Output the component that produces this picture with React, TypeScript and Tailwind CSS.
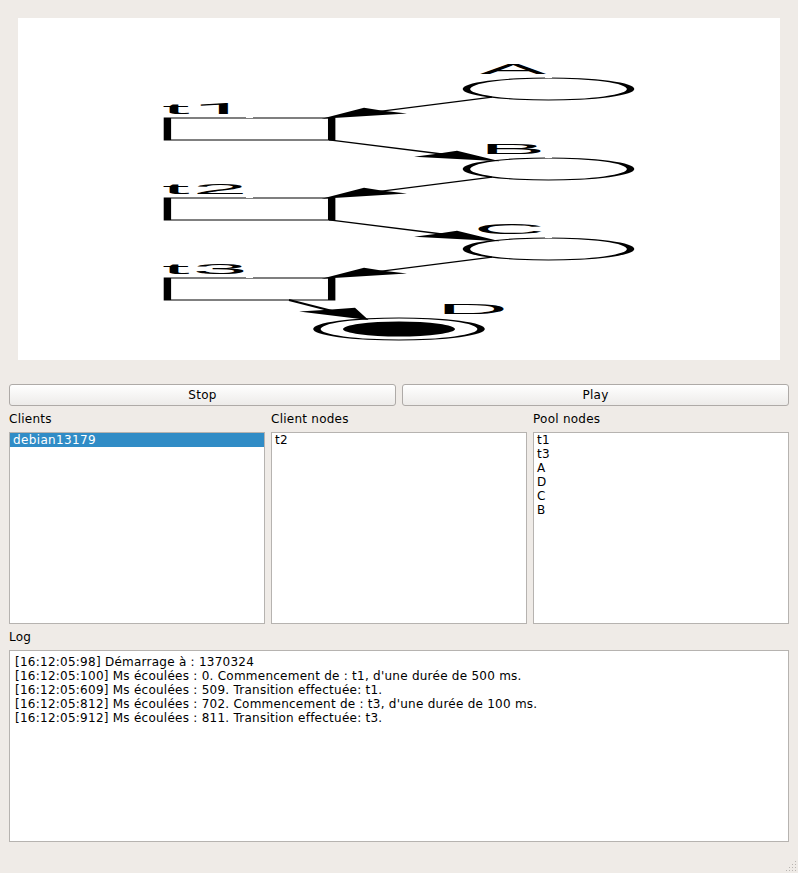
import React from "react";

const places = [
  { name: "A", x: 480, cy: 89 },
  { name: "B", x: 479.5, cy: 169 },
  { name: "C", x: 473.5, cy: 249 },
];
const transitions = [
  { digit: "1", y: 118 },
  { digit: "2", y: 198 },
  { digit: "3", y: 278 },
];

// Horizontal stretch of the net view relative to its natural proportions
const SX = 7.45;

function Label({ x, y, children }: { x: number; y: number; children: string }) {
  return (
    <text
      transform={`translate(${x} ${y}) scale(6.95 1)`}
      fontSize="14.3"
      className={
        children === "1"
          ? "font-[Roboto,sans-serif]"
          : "font-['Liberation_Sans',Arial,sans-serif]"
      }
    >
      {children}
    </text>
  );
}

function Place({ cx, cy }: { cx: number; cy: number }) {
  return (
    <g transform={`translate(${cx} ${cy}) scale(${SX} 1)`}>
      <circle r="11.02" fill="white" stroke="black" strokeWidth="1" />
    </g>
  );
}

function PetriNet() {
  return (
    <svg className="block h-[342px] w-[762px] bg-white" viewBox="18 18 762 342">
      {transitions.map((t) => (
        <g key={t.digit}>
          <g transform={`translate(167.4 ${t.y}) scale(7.4 1)`}>
            <rect width="22.2" height="22" fill="white" stroke="black" strokeWidth="1" />
          </g>
          <rect x="246" y={t.y - 1} width="7" height="1" fill="white" />
          <Label x={162} y={t.y - 4.5}>t</Label>
          <Label x={192.5} y={t.y - 4.5}>{t.digit}</Label>
        </g>
      ))}
      {places.map((p) => (
        <g key={p.name}>
          <Place cx={548.5} cy={p.cy} />
          <rect x="545" y={p.cy - 12} width="7" height="1" fill="white" />
          <Label x={p.x} y={p.cy - 15.5}>{p.name}</Label>
        </g>
      ))}
      <Place cx={399} cy={329} />
      <ellipse cx="399" cy="329" rx="56" ry="7.5" />
      <Label x={436.5} y={314.3}>D</Label>
      {transitions.map((t) => (
        <g key={t.digit}>
          <line x1="492" y1={t.y - 20.8} x2="370" y2={t.y - 5.3} stroke="black" strokeWidth="1.3" />
          <polygon
            points="321.5,118.8 364,107.7 383,110.8 407,113.5"
            transform={`translate(0 ${t.y - 118})`}
          />
        </g>
      ))}
      {[0, 80].map((dy) => (
        <g key={dy} transform={`translate(0 ${dy})`}>
          <line x1="329" y1="139.8" x2="450" y2="155" stroke="black" strokeWidth="1.3" />
          <polygon points="500,161.3 457,150.7 437,153.8 414,156.7" />
        </g>
      ))}
      <line x1="289" y1="300" x2="345" y2="314.2" stroke="black" strokeWidth="2" />
      <polygon points="368.5,320 355,307.7 328,309.7 299,311.5" />
    </svg>
  );
}

function Button({ children }: { children: string }) {
  return (
    <button className="h-[22px] flex-1 rounded-[3px] border border-[#aeaaa7] bg-linear-to-b from-white to-[#edebe9] text-center leading-5 tracking-[0.3px]">
      {children}
    </button>
  );
}

function NodeList({ title, items, selected }: { title: string; items: string[]; selected?: string }) {
  return (
    <section className="flex-1">
      <h2 className="h-[26px] leading-[26px]">{title}</h2>
      <ul className="h-[192px] border border-[#b6b3b0] bg-white tracking-[0.36px]">
        {items.map((item) => (
          <li
            key={item}
            className={
              item === selected
                ? "h-3.5 bg-[#308cc6] pl-[3px] leading-3.5 text-white"
                : "h-3.5 pl-[3px] leading-3.5"
            }
          >
            {item}
          </li>
        ))}
      </ul>
    </section>
  );
}

const log = [
  "[16:12:05:98] Démarrage à : 1370324",
  "[16:12:05:100] Ms écoulées : 0. Commencement de : t1, d'une durée de 500 ms.",
  "[16:12:05:609] Ms écoulées : 509. Transition effectuée: t1.",
  "[16:12:05:812] Ms écoulées : 702. Commencement de : t3, d'une durée de 100 ms.",
  "[16:12:05:912] Ms écoulées : 811. Transition effectuée: t3.",
];

export default function App() {
  return (
    <div className="flex h-[873px] w-[798px] flex-col bg-[#efebe7] px-[9px] font-['DejaVu_Sans',sans-serif] text-[12px] tracking-[0.25px] text-black">
      <div className="px-[9px] pt-[18px] pb-6">
        <PetriNet />
      </div>
      <div className="flex gap-1.5">
        <Button>Stop</Button>
        <Button>Play</Button>
      </div>
      <div className="flex gap-1.5">
        <NodeList title="Clients" items={["debian13179"]} selected="debian13179" />
        <NodeList title="Client nodes" items={["t2"]} />
        <NodeList title="Pool nodes" items={["t1", "t3", "A", "D", "C", "B"]} />
      </div>
      <h2 className="h-[26px] leading-[26px]">Log</h2>
      <div className="h-[192px] border border-[#b6b3b0] bg-white px-[5px] pt-1">
        {log.map((line) => (
          <p key={line} className="h-3.5 leading-3.5 whitespace-pre">{line}</p>
        ))}
      </div>
      <div className="-mr-[9px] flex flex-1 items-end justify-end">
        <svg className="block size-3" viewBox="0 0 12 12" fill="#b9b5b1" shapeRendering="crispEdges">
          {[0, 1, 2, 3].map((r) =>
            Array.from({ length: r + 1 }, (_, c) => (
              <rect key={`${r}-${c}`} x={9 - c * 3} y={r * 3} width="1" height="1" />
            )),
          )}
        </svg>
      </div>
    </div>
  );
}
